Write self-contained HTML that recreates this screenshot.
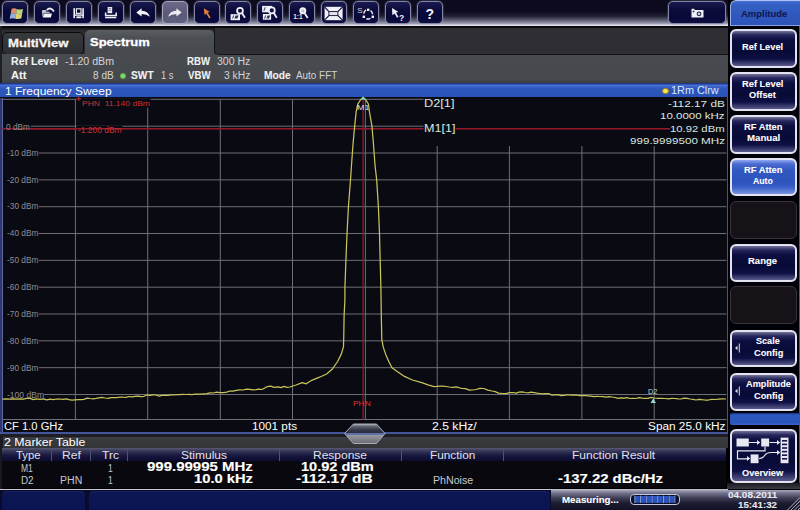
<!DOCTYPE html>
<html><head><meta charset="utf-8"><style>
*{margin:0;padding:0;box-sizing:border-box}
html,body{width:800px;height:510px;overflow:hidden;background:#000;font-family:"Liberation Sans",sans-serif}
.a{position:absolute}
.t{position:absolute;white-space:pre}
.tbb{position:absolute;top:0.8px;width:26px;height:23.6px;border-radius:5px;border:1.2px solid #8484a4;
 background:linear-gradient(#1a1a50 0,#0c0c3c 35%,#08083a 80%,#101040 100%);box-shadow:0 0 1.5px #9090b0;z-index:3}
.tbb svg{position:absolute;left:-1px;top:-1px}
.tbb.dis{background:linear-gradient(#6a6a88 0,#5a5a78 60%,#606080 100%);border-color:#a8a8c4}
.sk{position:absolute;left:729.5px;width:67px;border-radius:6px;border:2px solid #e2e2f0;
 background:linear-gradient(#74749a 0,#26265c 4px,#0c0e40 9px,#080a36 60%,#0e1044 80%,#5a5a8c 100%);z-index:10}
.sk.on{background:linear-gradient(#90a8f0 0,#4a6ad0 4px,#3058c0 10px,#2c54bc 65%,#3a60c8 80%,#7a94e0 100%)}
.sk.off{border:1.2px solid #36343a;background:#161218}
</style></head><body>
<!-- toolbar -->
<div class="a" style="left:0;top:0;width:728px;height:26px;background:linear-gradient(#0c0a1c 0,#0c0a1c 11px,#1e1e30 16px,#6a6a80 21px,#a8a8bc 24px,#e0e0ec 25px,#e0e0ec 25.5px,#101010 26px)"></div>
<div class="tbb" style="left:2.3px"><svg width="26" height="23" viewBox="0 0 26 23"><g transform="translate(8.2,7.2) scale(0.9)">
<path d="M1.6,0.6 Q4.5,-0.6 7.2,0.8 L6.6,6 Q3.6,5.2 0.6,6.2 Z" fill="#e06a40"/>
<path d="M7.2,0.8 Q10.5,2 14.2,0.8 L13.2,6.4 Q9.8,7.4 6.6,6 Z" fill="#a8c858"/>
<path d="M0.6,6.2 Q3.6,5.2 6.6,6 L5.8,11.6 Q2.8,10.6 -0.6,11.6 Z" fill="#7898d0"/>
<path d="M6.6,6 Q9.8,7.4 13.2,6.4 L12.4,11.2 Q9,12.6 5.8,11.6 Z" fill="#d0c848"/>
<path d="M1.6,0.6 Q4.5,-0.6 7.2,0.8 Q10.5,2 14.2,0.8 L12.4,11.2 Q9,12.6 5.8,11.6 Q2.8,10.6 -0.6,11.6 Z" fill="#ffffff" opacity="0.22"/>
</g></svg></div>
<div class="tbb" style="left:34.2px"><svg width="26" height="23" viewBox="0 0 26 23">
<rect x="8.1" y="9.2" width="4.2" height="1.6" fill="#f0f0f8"/>
<path d="M8.1,10.8 L15.3,10.8 L15.8,11.8 L9.6,11.8 L8.6,16.2 Z" fill="#e0e0ea"/>
<path d="M9.8,12.4 L18,12.4 L16.8,16.4 L8.8,16.4 Z" fill="#f4f4fa"/>
<path d="M12.8,8.9 Q16.8,5.6 19.9,10.4" stroke="#f0f0f8" stroke-width="1.9" fill="none"/>
</svg></div>
<div class="tbb" style="left:66.0px"><svg width="26" height="23" viewBox="0 0 26 23">
<rect x="7.4" y="7.2" width="1.6" height="10" fill="#f0f0f8"/>
<rect x="16.3" y="7.2" width="1.6" height="10" fill="#f0f0f8"/>
<rect x="10.4" y="7.8" width="4.6" height="4.6" fill="none" stroke="#e8e8f2" stroke-width="1.2"/>
<rect x="8.4" y="13.4" width="9" height="1.4" fill="#f0f0f8"/>
<rect x="10.4" y="15.4" width="5" height="1.8" fill="#f0f0f8"/>
</svg></div>
<div class="tbb" style="left:97.9px"><svg width="26" height="23" viewBox="0 0 26 23">
<rect x="9.6" y="6" width="4.6" height="6.2" fill="#e8e8f2"/>
<path d="M10.6,7.6 h2.6 M10.6,9.4 h2.6" stroke="#606080" stroke-width="0.7"/>
<path d="M7.6,11.4 v3.2 h10.6 v-3.2" fill="none" stroke="#f0f0f8" stroke-width="1.5"/>
<rect x="7.1" y="15.8" width="11.2" height="1.5" fill="#f0f0f8"/>
</svg></div>
<div class="tbb" style="left:129.8px"><svg width="26" height="23" viewBox="0 0 26 23">
<path d="M6.3,11.4 L11.6,7.3 L11.6,9.8 Q17.8,9.6 20,15.8 Q16.6,13.2 11.6,13.1 L11.6,15.5 Z" fill="#f0f0f8"/>
</svg></div>
<div class="tbb dis" style="left:161.7px"><svg width="26" height="23" viewBox="0 0 26 23">
<path d="M19.7,11.4 L14.4,7.3 L14.4,9.8 Q8.2,9.6 6,15.8 Q9.4,13.2 14.4,13.1 L14.4,15.5 Z" fill="#ececf4"/>
</svg></div>
<div class="tbb" style="left:193.5px"><svg width="26" height="23" viewBox="0 0 26 23">
<path d="M9.8,7.2 L15.8,10.9 L13.5,11.6 L16.6,16.6 L15.3,17.5 L12.2,12.5 L10.6,14.2 Z" fill="#e8803c"/>
</svg></div>
<div class="tbb" style="left:225.4px"><svg width="26" height="23" viewBox="0 0 26 23">
<rect x="5.6" y="13.2" width="9.4" height="6" fill="#f0f0f8"/>
<path d="M7,17.6 l1.2,-3 h1 l-1.2,3 Z M9.4,17.6 l1.2,-3 h3 l-1.2,3 Z" fill="#303058"/>
<circle cx="15" cy="9.8" r="2.9" fill="none" stroke="#f0f0f8" stroke-width="1.8"/>
<path d="M16.9,12.1 L20,16.8" stroke="#f0f0f8" stroke-width="1.8"/>
</svg></div>
<div class="tbb" style="left:257.3px"><svg width="26" height="23" viewBox="0 0 26 23">
<rect x="5.1" y="4.9" width="10" height="6.4" fill="#f0f0f8"/>
<path d="M6.4,9.8 l1.4,-3.6 h1 l-1.4,3.6 Z" fill="#303058"/>
<rect x="5.9" y="13" width="8.2" height="5.7" fill="#f0f0f8"/>
<path d="M7,17.4 l1.2,-3 h1 l-1.2,3 Z M9.4,17.4 l1.2,-3 h2.6 l-1.2,3 Z" fill="#303058"/>
<circle cx="14.8" cy="9.4" r="3" fill="#14144a" stroke="#f0f0f8" stroke-width="1.7"/>
<path d="M16.7,11.8 L19.8,16.9" stroke="#f0f0f8" stroke-width="1.8"/>
</svg></div>
<div class="tbb" style="left:289.1px"><svg width="26" height="23" viewBox="0 0 26 23">
<text x="4.2" y="18.4" font-family="Liberation Sans" font-weight="700" font-size="6.5" fill="#e8e8f0">1:1</text>
<circle cx="13.8" cy="9.8" r="3.5" fill="#f0f0f8"/>
<circle cx="13.8" cy="9.8" r="1.6" fill="#c0c0d0"/>
<path d="M15.8,12.5 L18.7,17" stroke="#f0f0f8" stroke-width="1.8"/>
</svg></div>
<div class="tbb" style="left:321.0px"><svg width="26" height="23" viewBox="0 0 26 23">
<rect x="3.6" y="5.8" width="18" height="13.4" fill="#f0f0f8"/>
<path d="M3.6,5.8 L7.9,10.6 M21.6,5.8 L16.9,10.6 M3.6,19.2 L7.9,14.6 M21.6,19.2 L16.9,14.6" stroke="#101030" stroke-width="1.1"/>
<rect x="7.9" y="10.6" width="9" height="4" fill="#e4e4ee" stroke="#101030" stroke-width="0.9"/>
</svg></div>
<div class="tbb" style="left:352.9px"><svg width="26" height="23" viewBox="0 0 26 23">
<text x="4.2" y="11.6" font-family="Liberation Sans" font-size="8" fill="#d8d8e8">S</text>
<g fill="#f0f0f8"><rect x="14" y="7.6" width="2.4" height="2.4"/><rect x="9.6" y="14.6" width="2.4" height="2.4"/><rect x="18.6" y="14.6" width="2.4" height="2.4"/></g>
<path d="M10.6,12.6 Q11.4,10 13,8.8 M17.6,9.4 Q19.4,11 19.6,13.2 M13.4,17.6 Q15.2,18.6 17.4,17.4" stroke="#f0f0f8" stroke-width="1.4" fill="none"/>
</svg></div>
<div class="tbb" style="left:384.7px"><svg width="26" height="23" viewBox="0 0 26 23">
<path d="M7,7 L13.5,11 L11,11.6 L13.5,16 L12,16.8 L9.6,12.4 L7.4,14.2 Z" fill="#f0f0f8"/>
<text x="14" y="20" font-family="Liberation Sans" font-weight="700" font-size="8.5" fill="#f0f0f8">?</text>
</svg></div>
<div class="tbb" style="left:416.6px"><svg width="26" height="23" viewBox="0 0 26 23">
<text x="8.5" y="17.5" font-family="Liberation Sans" font-weight="700" font-size="14" fill="#f4f4fa">?</text>
</svg></div>
<div class="tbb" style="left:667.5px;width:58px"><svg width="58" height="23" viewBox="0 0 58 23">
<rect x="23.5" y="9" width="12" height="7.5" fill="#f0f0f8"/><rect x="23.5" y="7.8" width="3" height="1.5" fill="#f0f0f8"/>
<circle cx="31" cy="12.8" r="2.4" fill="#202040"/><circle cx="31" cy="12.8" r="1.4" fill="#d0d0e0"/><circle cx="25.5" cy="10.5" r="1" fill="#404060"/>
</svg></div>
<!-- tab bar -->
<div class="a" style="left:0;top:26px;width:728px;height:28px;background:linear-gradient(#0a0a0a 0,#0a0a0a 1.5px,#222226 3px,#2f2e34 6px,#2f2e34 100%)"></div>
<div class="a" style="left:1.5px;top:32px;width:82px;height:22.5px;border-radius:5px;border:1px solid #0a0a0a;background:linear-gradient(#38393c,#2e2f32)"></div>
<div class="a" style="left:85px;top:30px;width:129px;height:26px;border-radius:5px 5px 0 0;background:linear-gradient(#5a5d62 0,#4c4f54 30%,#46494e 100%)"></div>
<!-- info panel -->
<div class="a" style="left:0;top:54px;width:728px;height:29px;background:linear-gradient(#484b50 0,#45484d 90%,#3a3c42 100%)"></div>
<div class="a" style="left:0;top:26px;width:1.5px;height:57px;background:#202024;z-index:1"></div>
<div class="a" style="left:214px;top:28px;width:514px;height:26.5px;border-radius:0 0 0 5px;background:#2f2e34;border-left:1px solid #141414;border-bottom:1.2px solid #141414"></div>
<div class="a" style="left:119.5px;top:73px;width:6px;height:6px;border-radius:50%;background:radial-gradient(#a0e890 0,#60c050 55%,#3a8030 100%)"></div>
<!-- diagram frame -->
<div class="a" style="left:0;top:84px;width:728px;height:350px;background:#5a6aa8"></div>
<div class="a" style="left:3px;top:97px;width:724px;height:335px;background:#0a0a12"></div>
<div class="a" style="left:0;top:97px;width:1.8px;height:335px;background:#34366a"></div>
<div class="a" style="left:0;top:82.5px;width:728px;height:14.5px;background:linear-gradient(#1a2e70 0,#2a4aa8 1.2px,#4a72d6 2.4px,#3a62c8 3.6px,#2c56bc 6px,#2852b4 100%)"></div>
<div class="a" style="left:0;top:96.5px;width:728px;height:1.5px;background:#0a0a18"></div>
<div class="a" style="left:662.3px;top:87.8px;width:6.4px;height:6.4px;border-radius:50%;background:#f4e850;border:0.8px solid #a08020"></div>
<svg class="a" style="left:0;top:0;z-index:2" width="800" height="510">
<g stroke="#6e6e76" stroke-width="1"><line x1="75.40" y1="99.3" x2="75.40" y2="419.5"/>
<line x1="147.70" y1="99.3" x2="147.70" y2="419.5"/>
<line x1="220.30" y1="99.3" x2="220.30" y2="419.5"/>
<line x1="292.50" y1="99.3" x2="292.50" y2="419.5"/>
<line x1="365.40" y1="99.3" x2="365.40" y2="419.5"/>
<line x1="437.20" y1="99.3" x2="437.20" y2="419.5"/>
<line x1="509.40" y1="99.3" x2="509.40" y2="419.5"/>
<line x1="581.90" y1="99.3" x2="581.90" y2="419.5"/>
<line x1="654.20" y1="99.3" x2="654.20" y2="419.5"/>
<line x1="2.5" y1="99.30" x2="726.5" y2="99.30"/>
<line x1="2.5" y1="126.20" x2="726.5" y2="126.20"/>
<line x1="2.5" y1="153.03" x2="726.5" y2="153.03"/>
<line x1="2.5" y1="179.86" x2="726.5" y2="179.86"/>
<line x1="2.5" y1="206.69" x2="726.5" y2="206.69"/>
<line x1="2.5" y1="233.52" x2="726.5" y2="233.52"/>
<line x1="2.5" y1="260.35" x2="726.5" y2="260.35"/>
<line x1="2.5" y1="287.18" x2="726.5" y2="287.18"/>
<line x1="2.5" y1="314.01" x2="726.5" y2="314.01"/>
<line x1="2.5" y1="340.84" x2="726.5" y2="340.84"/>
<line x1="2.5" y1="367.67" x2="726.5" y2="367.67"/>
<line x1="2.5" y1="394.50" x2="726.5" y2="394.50"/>
<line x1="2.5" y1="419.50" x2="726.5" y2="419.50"/></g>
<line x1="2.5" y1="128.8" x2="726" y2="128.8" stroke="#98182c" stroke-width="1.4"/>
<line x1="363.1" y1="99.3" x2="363.1" y2="419.5" stroke="#90182c" stroke-width="1.3"/>
<!-- label backgrounds -->
<g fill="#0a0a12">
<rect x="3" y="122" width="28" height="9"/>
<rect x="3" y="148.7" width="35.8" height="9"/><rect x="3" y="175.5" width="35.8" height="9"/><rect x="3" y="202.4" width="35.8" height="9"/><rect x="3" y="229.2" width="35.8" height="9"/><rect x="3" y="256.0" width="35.8" height="9"/><rect x="3" y="282.8" width="35.8" height="9"/><rect x="3" y="309.7" width="35.8" height="9"/><rect x="3" y="336.5" width="35.8" height="9"/><rect x="3" y="363.3" width="35.8" height="9"/><rect x="3" y="390.2" width="41" height="9"/>
<rect x="76.6" y="98.6" width="74" height="9"/>
<rect x="76.5" y="125.5" width="46" height="9"/>
<rect x="423.5" y="98" width="303" height="48"/>
</g>
<line x1="2.5" y1="128.8" x2="76" y2="128.8" stroke="#98182c" stroke-width="1.4"/>
<line x1="76" y1="128.8" x2="124" y2="128.8" stroke="#98182c" stroke-width="1.4"/>
<line x1="456" y1="128.8" x2="670" y2="128.8" stroke="#98182c" stroke-width="1.4"/>
<path d="M76.5,98.8 h4.5 M78.75,96.5 v4.5" stroke="#c83232" stroke-width="1"/>
<path d="M2.5,399.2 L6.0,398.8 L9.5,399.1 L13.0,398.8 L16.5,399.1 L20.0,398.9 L23.3,399.1 L26.7,398.4 L30.0,398.4 L33.3,399.6 L36.7,398.9 L40.0,399.3 L43.3,398.9 L46.7,399.9 L50.0,399.1 L53.3,399.6 L56.7,399.0 L60.0,399.0 L63.0,399.4 L66.0,398.8 L69.0,399.7 L72.0,400.2 L75.0,399.8 L78.0,399.6 L81.0,399.6 L84.0,399.3 L87.0,398.1 L90.0,398.5 L93.0,398.8 L96.0,398.4 L99.0,397.9 L102.0,397.4 L105.0,398.0 L108.0,398.3 L111.0,397.6 L114.0,397.7 L117.0,397.7 L120.0,397.0 L123.0,397.2 L126.0,397.3 L129.0,396.5 L132.0,396.9 L135.0,396.4 L138.0,396.1 L141.0,396.6 L144.0,396.3 L147.0,395.0 L150.0,395.4 L153.0,394.9 L156.0,395.0 L159.0,396.1 L162.0,395.3 L165.0,395.4 L168.0,395.4 L171.0,394.8 L174.0,395.0 L177.0,394.7 L180.0,394.7 L183.0,394.4 L186.0,394.5 L189.0,394.4 L192.0,394.7 L195.0,394.0 L198.0,394.0 L201.0,394.1 L204.0,393.8 L207.0,393.7 L210.0,392.8 L213.3,393.0 L216.7,392.2 L220.0,392.6 L223.3,392.6 L226.7,392.2 L230.0,391.0 L233.2,391.2 L236.3,390.3 L239.5,389.8 L243.0,390.0 L246.5,389.1 L250.0,389.4 L253.0,389.9 L256.0,389.6 L259.0,389.2 L262.0,389.5 L267.0,386.7 L270.7,386.2 L274.3,387.3 L278.0,386.9 L281.0,387.6 L284.0,386.4 L287.0,387.4 L290.0,387.0 L296.0,385.0 L302.3,382.7 L306.2,383.8 L311.7,380.3 L319.5,377.2 L326.6,374.0 L332.1,369.3 L337.6,361.5 L341.5,353.6 L343.5,346.6 L343.8,335.0 L344.1,316.0 L344.9,300.0 L344.9,288.0 L345.9,261.0 L347.0,234.0 L348.4,207.0 L350.5,180.0 L351.5,165.0 L353.2,142.0 L354.7,125.8 L356.2,111.6 L357.8,104.0 L360.6,99.8 L363.2,97.3 L365.8,99.8 L368.4,104.0 L369.4,111.6 L371.9,125.8 L373.3,142.0 L375.0,165.0 L376.7,180.0 L378.4,207.0 L379.5,234.0 L380.2,261.0 L380.9,288.0 L381.1,300.0 L381.3,316.0 L381.8,339.5 L383.3,347.4 L385.7,354.4 L388.8,361.5 L392.0,367.8 L397.5,371.7 L404.5,376.4 L412.4,380.0 L421.8,382.7 L428.0,384.8 L434.0,386.6 L437.0,386.4 L440.0,386.1 L443.0,386.2 L446.0,386.5 L449.4,387.0 L452.8,387.3 L456.2,386.9 L462.0,388.5 L465.6,388.7 L469.2,390.1 L472.6,390.0 L476.0,389.5 L479.9,388.4 L483.9,388.5 L487.9,390.1 L492.0,391.0 L495.2,391.6 L498.5,393.1 L501.7,393.4 L505.9,393.6 L510.0,392.5 L513.0,392.5 L516.0,393.2 L519.0,392.2 L522.0,391.9 L525.0,392.5 L528.0,392.8 L531.0,392.2 L534.0,392.7 L537.0,393.2 L540.0,393.5 L543.0,393.9 L546.0,393.6 L549.0,393.7 L552.0,395.1 L555.0,394.9 L558.0,394.7 L561.0,395.6 L564.0,395.5 L567.0,394.8 L570.0,395.0 L573.0,395.0 L576.0,395.2 L579.0,395.5 L582.0,395.5 L585.0,395.5 L588.0,395.8 L591.0,396.1 L594.0,396.7 L597.0,396.3 L600.0,396.5 L603.0,396.6 L606.0,397.2 L609.0,396.7 L612.0,397.0 L615.0,397.5 L618.0,398.4 L621.0,397.9 L624.0,398.2 L627.0,397.6 L630.0,398.5 L633.0,398.3 L636.0,398.5 L639.0,397.6 L642.0,398.2 L645.0,398.3 L648.0,398.3 L651.0,397.4 L654.0,398.0 L657.7,398.3 L661.3,398.3 L665.0,398.5 L668.3,398.8 L671.7,398.3 L675.0,398.5 L678.0,398.9 L681.0,399.0 L684.0,398.1 L687.0,398.3 L690.0,399.0 L693.0,399.4 L696.0,400.0 L699.0,399.3 L702.0,399.7 L705.0,400.0 L708.3,400.0 L711.7,399.4 L715.0,399.5 L718.7,399.1 L722.3,398.9 L726.0,399.0" fill="none" stroke="#c8c45a" stroke-width="1.25" stroke-linejoin="round"/>
<path d="M361.2,99.8 L363.2,96.6 L365.2,99.8 Z" fill="#60d8e8"/>
<path d="M650.6,403 L653.2,398.2 L655.9,403 Z" fill="#98d4d4"/>
</svg>
<!-- footer -->
<div class="a" style="left:3px;top:420.2px;width:724px;height:11px;background:#0a0a12;z-index:3"></div>
<div class="a" style="left:0;top:432px;width:728px;height:1.8px;background:#44549a;z-index:3"></div>
<div class="a" style="left:0;top:433.8px;width:728px;height:3px;background:#1e1e22;z-index:3"></div>
<svg class="a" style="left:343px;top:423px;z-index:4" width="43" height="22"><defs><linearGradient id="hg" x1="0" y1="0" x2="0" y2="1"><stop offset="0" stop-color="#b0b0b8"/><stop offset="0.12" stop-color="#60646e"/><stop offset="0.3" stop-color="#34384a"/><stop offset="0.44" stop-color="#2a2e40"/><stop offset="0.46" stop-color="#6070a8"/><stop offset="0.54" stop-color="#6070a8"/><stop offset="0.56" stop-color="#9a9aa2"/><stop offset="1" stop-color="#6a6a72"/></linearGradient></defs>
<path d="M1.5,10.5 L10.5,1 L33.5,1 L42,10.5 L33.5,20.5 L10.5,20.5 Z" fill="url(#hg)" stroke="#a8acb8" stroke-width="1"/></svg>
<!-- marker table -->
<div class="a" style="left:0;top:436.6px;width:728px;height:11.6px;background:linear-gradient(#3a3c40,#333539);z-index:3"></div><div class="a" style="left:0;top:436px;width:2.5px;height:54px;background:#1a1a1e;z-index:3"></div>
<div class="a" style="left:2px;top:448px;width:724px;height:40px;background:#08080e;z-index:3"></div>
<div class="a" style="left:2px;top:448px;width:724px;height:12.5px;background:linear-gradient(#5a5a74 0,#3a3a5c 20%,#16163e 60%,#0c0c30 100%);z-index:3"></div>
<div class="a" style="left:0;top:488.5px;width:728px;height:1.5px;background:#c8c8d8;z-index:3"></div>
<div class="a" style="left:51px;top:448px;width:1px;height:12.5px;background:#505070;z-index:4"></div><div class="a" style="left:90px;top:448px;width:1px;height:12.5px;background:#505070;z-index:4"></div><div class="a" style="left:126.6px;top:448px;width:1px;height:12.5px;background:#505070;z-index:4"></div><div class="a" style="left:279.4px;top:448px;width:1px;height:12.5px;background:#505070;z-index:4"></div><div class="a" style="left:400.5px;top:448px;width:1px;height:12.5px;background:#505070;z-index:4"></div><div class="a" style="left:502.6px;top:448px;width:1px;height:12.5px;background:#505070;z-index:4"></div>
<!-- status bar -->
<div class="a" style="left:0;top:490px;width:800px;height:20px;background:linear-gradient(#0a0a2a,#0a0a30);z-index:3"></div>
<div class="a" style="left:2px;top:491px;width:83px;height:19px;border-radius:4px 4px 0 0;background:linear-gradient(#1a2260 0,#0c1652 2px,#0a1450 100%);z-index:4"></div>
<div class="a" style="left:89px;top:491px;width:461px;height:19px;border-radius:4px 4px 0 0;background:linear-gradient(#1a2260 0,#0c1652 2px,#0a1450 100%);z-index:4"></div>
<div class="a" style="left:551px;top:489px;width:249px;height:21px;background:linear-gradient(#d0d0dc 0,#a8a8bc 1px,#74748e 4px,#3e3e56 9px,#1c1c32 14px,#121226 100%);z-index:4"></div>
<div class="a" style="left:629.5px;top:494px;width:50px;height:10.5px;border-radius:4px;border:1.2px solid #c4c4dc;background:#08102c;z-index:5"></div>
<svg class="a" style="left:629.5px;top:494px;z-index:6" width="50" height="11"><g fill="#2a54c0"><rect x="5.00" y="2" width="4.9" height="6.8"/><rect x="10.72" y="2" width="4.9" height="6.8"/><rect x="16.44" y="2" width="4.9" height="6.8"/><rect x="22.16" y="2" width="4.9" height="6.8"/><rect x="27.88" y="2" width="4.9" height="6.8"/><rect x="33.60" y="2" width="4.9" height="6.8"/><rect x="39.32" y="2" width="4.9" height="6.8"/></g><g fill="#98a4dc"><rect x="4.40" y="1.6" width="0.9" height="7.4"/><rect x="10.12" y="1.6" width="0.9" height="7.4"/><rect x="15.84" y="1.6" width="0.9" height="7.4"/><rect x="21.56" y="1.6" width="0.9" height="7.4"/><rect x="27.28" y="1.6" width="0.9" height="7.4"/><rect x="33.00" y="1.6" width="0.9" height="7.4"/><rect x="38.72" y="1.6" width="0.9" height="7.4"/><rect x="44.44" y="1.6" width="0.9" height="7.4"/></g></svg>
<svg class="a" style="left:786px;top:496px;z-index:6" width="14" height="14"><g stroke="#b0b0c0" stroke-width="1"><path d="M14,1.5 L1.5,14 M14,5 L5,14 M14,8.5 L8.5,14 M14,12 L12,14"/></g></svg>
<!-- softkeys -->
<div class="a" style="left:728px;top:0;width:72px;height:490px;background:#000008;z-index:9"></div>
<div class="a" style="left:798.5px;top:26px;width:1.5px;height:457px;background:#3a5ab8;z-index:9"></div>
<div class="a" style="left:726.5px;top:483px;width:73.5px;height:6px;background:linear-gradient(#1a1a22,#3a3a42);z-index:9"></div>
<div class="a" style="left:726.6px;top:84px;width:1.8px;height:350px;background:#3454b0;z-index:9"></div>
<div class="a" style="left:729.5px;top:0;width:70.5px;height:25.5px;border-radius:6px 0 0 0;border-top:1px solid #b0c4f4;border-left:1.5px solid #9ab0e8;border-bottom:1px solid #8aa0e0;background:linear-gradient(#4a70d4 0,#3560c4 3px,#3058bc 60%,#2c54b8 100%);z-index:10"></div>
<div class="sk" style="top:28.8px;height:39.4px"></div>
<div class="sk" style="top:72.3px;height:38.5px"></div>
<div class="sk" style="top:115px;height:38.5px"></div>
<div class="sk on" style="top:158px;height:38px"></div>
<div class="sk off" style="top:200.6px;height:38.8px"></div>
<div class="sk" style="top:243.6px;height:38.2px"></div>
<div class="sk off" style="top:285.5px;height:38.8px"></div>
<div class="sk" style="top:329.7px;height:37.8px"></div>
<div class="sk" style="top:372.8px;height:37.8px"></div>
<div class="a" style="left:729.5px;top:413px;width:70.5px;height:12px;border-radius:2px 0 0 2px;background:linear-gradient(#18307a 0,#2c58c0 2px,#2a54b8 80%,#3a64c8 100%);z-index:10"></div>
<div class="sk" style="top:428.8px;height:53.8px"></div>
<svg class="a" style="left:729px;top:428px;z-index:12" width="70" height="40">
<g fill="#e8e8f0"><rect x="7.5" y="10.5" width="12.3" height="8"/><rect x="32.2" y="10.5" width="7.9" height="8"/><rect x="21.6" y="26.4" width="7.9" height="8.8"/>
<rect x="51.6" y="9.6" width="7.9" height="25.6"/></g>
<g fill="#14144a"><rect x="53" y="12" width="5.1" height="1.6"/><rect x="53" y="15.6" width="5.1" height="1.6"/><rect x="53" y="19.2" width="5.1" height="1.6"/><rect x="53" y="22.8" width="5.1" height="1.6"/><rect x="53" y="26.4" width="5.1" height="1.6"/><rect x="53" y="30" width="5.1" height="1.6"/></g>
<g stroke="#e8e8f0" stroke-width="1.2" fill="none"><path d="M20,14.5 h9 M40.5,14.5 h8.5 M36,18.8 v4 h-27.5 v8 h10 M30,30.5 q4,0 6,-3.5 q2,-2.5 6,-2.5 h6"/></g>
<g fill="#e8e8f0"><path d="M28,12 l3.2,2.5 -3.2,2.5 Z M48,12 l3.2,2.5 -3.2,2.5 Z M18,28 l3.2,2.5 -3.2,2.5 Z M48,22 l3.2,2.5 -3.2,2.5 Z"/></g>
</svg>
<svg class="a" style="left:733px;top:340px;z-index:12" width="10" height="60"><g fill="#e0e0e8"><path d="M2,8 l2.5,-2.2 v4.4 Z M2,51 l2.5,-2.2 v4.4 Z"/><rect x="5.8" y="3.5" width="1" height="9"/><rect x="5.8" y="46.5" width="1" height="9"/></g></svg>
<div class="t" style="left:8.00px;top:38.29px;font-size:11px;line-height:11px;font-weight:700;color:#f4f4f4;transform:scaleX(1.197);transform-origin:0 0;-webkit-text-stroke:0.3px #f4f4f4;z-index:5">MultiView</div>
<div class="t" style="left:90.00px;top:36.89px;font-size:11px;line-height:11px;font-weight:700;color:#ffffff;transform:scaleX(1.178);transform-origin:0 0;-webkit-text-stroke:0.3px #ffffff;z-index:5">Spectrum</div>
<div class="t" style="left:10.50px;top:57.33px;font-size:10px;line-height:10px;font-weight:700;color:#f2f2f2;transform:scaleX(1.056);transform-origin:0 0;-webkit-text-stroke:0.08px #f2f2f2;z-index:5">Ref Level</div>
<div class="t" style="left:64.50px;top:57.33px;font-size:10px;line-height:10px;font-weight:400;color:#d4d4d4;transform:scaleX(1.063);transform-origin:0 0;z-index:5">-1.20 dBm</div>
<div class="t" style="left:10.80px;top:70.83px;font-size:10px;line-height:10px;font-weight:700;color:#f2f2f2;transform:scaleX(1.113);transform-origin:0 0;-webkit-text-stroke:0.08px #f2f2f2;z-index:5">Att</div>
<div class="t" style="left:93.00px;top:70.83px;font-size:10px;line-height:10px;font-weight:400;color:#d4d4d4;transform:scaleX(1.005);transform-origin:0 0;z-index:5">8 dB</div>
<div class="t" style="left:131.25px;top:71.13px;font-size:10px;line-height:10px;font-weight:700;color:#f2f2f2;transform:scaleX(1.018);transform-origin:0 0;-webkit-text-stroke:0.08px #f2f2f2;z-index:5">SWT</div>
<div class="t" style="left:161.25px;top:71.13px;font-size:10px;line-height:10px;font-weight:400;color:#d4d4d4;transform:scaleX(0.937);transform-origin:0 0;z-index:5">1 s</div>
<div class="t" style="left:187.00px;top:56.73px;font-size:10px;line-height:10px;font-weight:700;color:#f2f2f2;transform:scaleX(0.961);transform-origin:0 0;-webkit-text-stroke:0.08px #f2f2f2;z-index:5">RBW</div>
<div class="t" style="left:216.60px;top:56.73px;font-size:10px;line-height:10px;font-weight:400;color:#d4d4d4;transform:scaleX(1.051);transform-origin:0 0;z-index:5">300 Hz</div>
<div class="t" style="left:187.50px;top:70.83px;font-size:10px;line-height:10px;font-weight:700;color:#f2f2f2;transform:scaleX(0.963);transform-origin:0 0;-webkit-text-stroke:0.08px #f2f2f2;z-index:5">VBW</div>
<div class="t" style="left:223.60px;top:70.83px;font-size:10px;line-height:10px;font-weight:400;color:#d4d4d4;transform:scaleX(1.029);transform-origin:0 0;z-index:5">3 kHz</div>
<div class="t" style="left:263.90px;top:70.83px;font-size:10px;line-height:10px;font-weight:700;color:#f2f2f2;transform:scaleX(1.021);transform-origin:0 0;-webkit-text-stroke:0.08px #f2f2f2;z-index:5">Mode</div>
<div class="t" style="left:296.25px;top:70.83px;font-size:10px;line-height:10px;font-weight:400;color:#d4d4d4;transform:scaleX(0.990);transform-origin:0 0;z-index:5">Auto FFT</div>
<div class="t" style="left:4.70px;top:85.51px;font-size:10.5px;line-height:10.5px;font-weight:400;color:#ffffff;transform:scaleX(1.141);transform-origin:0 0;z-index:5">1 Frequency Sweep</div>
<div class="t" style="left:670.90px;top:85.01px;font-size:10.5px;line-height:10.5px;font-weight:400;color:#d8e8ff;transform:scaleX(1.034);transform-origin:0 0;z-index:5">1Rm Clrw</div>
<div class="t" style="left:6.20px;top:122.50px;font-size:8.5px;line-height:8.5px;font-weight:400;color:#8e8e94;transform:scaleX(0.972);transform-origin:0 0;z-index:3">0 dBm</div>
<div class="t" style="left:6.60px;top:148.67px;font-size:8.5px;line-height:8.5px;font-weight:400;color:#8e8e94;transform:scaleX(0.980);transform-origin:0 0;z-index:3">-10 dBm</div>
<div class="t" style="left:6.60px;top:175.54px;font-size:8.5px;line-height:8.5px;font-weight:400;color:#8e8e94;transform:scaleX(0.980);transform-origin:0 0;z-index:3">-20 dBm</div>
<div class="t" style="left:6.60px;top:202.41px;font-size:8.5px;line-height:8.5px;font-weight:400;color:#8e8e94;transform:scaleX(0.980);transform-origin:0 0;z-index:3">-30 dBm</div>
<div class="t" style="left:6.60px;top:229.28px;font-size:8.5px;line-height:8.5px;font-weight:400;color:#8e8e94;transform:scaleX(0.980);transform-origin:0 0;z-index:3">-40 dBm</div>
<div class="t" style="left:6.60px;top:256.15px;font-size:8.5px;line-height:8.5px;font-weight:400;color:#8e8e94;transform:scaleX(0.980);transform-origin:0 0;z-index:3">-50 dBm</div>
<div class="t" style="left:6.60px;top:283.02px;font-size:8.5px;line-height:8.5px;font-weight:400;color:#8e8e94;transform:scaleX(0.980);transform-origin:0 0;z-index:3">-60 dBm</div>
<div class="t" style="left:6.60px;top:309.89px;font-size:8.5px;line-height:8.5px;font-weight:400;color:#8e8e94;transform:scaleX(0.980);transform-origin:0 0;z-index:3">-70 dBm</div>
<div class="t" style="left:6.60px;top:336.76px;font-size:8.5px;line-height:8.5px;font-weight:400;color:#8e8e94;transform:scaleX(0.980);transform-origin:0 0;z-index:3">-80 dBm</div>
<div class="t" style="left:6.60px;top:363.63px;font-size:8.5px;line-height:8.5px;font-weight:400;color:#8e8e94;transform:scaleX(0.980);transform-origin:0 0;z-index:3">-90 dBm</div>
<div class="t" style="left:6.60px;top:390.50px;font-size:8.5px;line-height:8.5px;font-weight:400;color:#8e8e94;transform:scaleX(1.004);transform-origin:0 0;z-index:3">-100 dBm</div>
<div class="t" style="left:81.75px;top:99.63px;font-size:8px;line-height:8px;font-weight:400;color:#c83232;transform:scaleX(1.063);transform-origin:0 0;z-index:3">PHN&nbsp;&nbsp;11.140&nbsp;dBm</div>
<div class="t" style="left:78.00px;top:125.90px;font-size:8.5px;line-height:8.5px;font-weight:400;color:#c83232;transform:scaleX(0.992);transform-origin:0 0;z-index:3">-1.200 dBm</div>
<div class="t" style="left:424.25px;top:99.03px;font-size:10px;line-height:10px;font-weight:400;color:#d8e8e0;transform:scaleX(1.275);transform-origin:0 0;z-index:4">D2[1]</div>
<div class="t" style="left:424.00px;top:124.23px;font-size:10px;line-height:10px;font-weight:400;color:#d8e8e0;transform:scaleX(1.258);transform-origin:0 0;z-index:4">M1[1]</div>
<div class="t" style="left:668.30px;top:100.01px;font-size:9.2px;line-height:9.2px;font-weight:400;color:#d8e8e0;transform:scaleX(1.285);transform-origin:0 0;z-index:4">-112.17 dB</div>
<div class="t" style="left:659.90px;top:112.11px;font-size:9.2px;line-height:9.2px;font-weight:400;color:#d8e8e0;transform:scaleX(1.252);transform-origin:0 0;z-index:4">10.0000 kHz</div>
<div class="t" style="left:670.00px;top:124.81px;font-size:9.2px;line-height:9.2px;font-weight:400;color:#d8e8e0;transform:scaleX(1.228);transform-origin:0 0;z-index:4">10.92 dBm</div>
<div class="t" style="left:629.50px;top:137.21px;font-size:9.2px;line-height:9.2px;font-weight:400;color:#d8e8e0;transform:scaleX(1.265);transform-origin:0 0;z-index:4">999.9999500 MHz</div>
<div class="t" style="left:357.00px;top:103.83px;font-size:8px;line-height:8px;font-weight:400;color:#d8e8e0;transform:scaleX(1.115);transform-origin:0 0;z-index:4">M1</div>
<div class="t" style="left:648.00px;top:387.85px;font-size:7.5px;line-height:7.5px;font-weight:400;color:#c0dcd8;transform:scaleX(0.977);transform-origin:0 0;z-index:4">D2</div>
<div class="t" style="left:353.00px;top:399.83px;font-size:8px;line-height:8px;font-weight:400;color:#d83838;transform:scaleX(1.052);transform-origin:0 0;z-index:4">PHN</div>
<div class="t" style="left:4.00px;top:422.14px;font-size:10px;line-height:10px;font-weight:400;color:#ffffff;transform:scaleX(1.118);transform-origin:0 0;z-index:5">CF 1.0 GHz</div>
<div class="t" style="left:252.00px;top:421.74px;font-size:10px;line-height:10px;font-weight:400;color:#ffffff;transform:scaleX(1.173);transform-origin:0 0;z-index:5">1001 pts</div>
<div class="t" style="left:432.00px;top:421.74px;font-size:10px;line-height:10px;font-weight:400;color:#ffffff;transform:scaleX(1.219);transform-origin:0 0;z-index:5">2.5 kHz/</div>
<div class="t" style="left:647.50px;top:421.74px;font-size:10px;line-height:10px;font-weight:400;color:#ffffff;transform:scaleX(1.181);transform-origin:0 0;z-index:5">Span 25.0 kHz</div>
<div class="t" style="left:4.00px;top:437.54px;font-size:10px;line-height:10px;font-weight:400;color:#ffffff;transform:scaleX(1.232);transform-origin:0 0;z-index:5">2 Marker Table</div>
<div class="t" style="left:16.00px;top:450.74px;font-size:10px;line-height:10px;font-weight:400;color:#e0e0e8;transform:scaleX(1.130);transform-origin:0 0;z-index:5">Type</div>
<div class="t" style="left:62.00px;top:450.74px;font-size:10px;line-height:10px;font-weight:400;color:#e0e0e8;transform:scaleX(1.204);transform-origin:0 0;z-index:5">Ref</div>
<div class="t" style="left:102.00px;top:450.74px;font-size:10px;line-height:10px;font-weight:400;color:#e0e0e8;transform:scaleX(1.208);transform-origin:0 0;z-index:5">Trc</div>
<div class="t" style="left:181.00px;top:450.74px;font-size:10px;line-height:10px;font-weight:400;color:#e0e0e8;transform:scaleX(1.200);transform-origin:0 0;z-index:5">Stimulus</div>
<div class="t" style="left:313.00px;top:450.74px;font-size:10px;line-height:10px;font-weight:400;color:#e0e0e8;transform:scaleX(1.199);transform-origin:0 0;z-index:5">Response</div>
<div class="t" style="left:429.70px;top:450.74px;font-size:10px;line-height:10px;font-weight:400;color:#e0e0e8;transform:scaleX(1.180);transform-origin:0 0;z-index:5">Function</div>
<div class="t" style="left:572.30px;top:450.74px;font-size:10px;line-height:10px;font-weight:400;color:#e0e0e8;transform:scaleX(1.197);transform-origin:0 0;z-index:5">Function Result</div>
<div class="t" style="left:21.00px;top:463.94px;font-size:10px;line-height:10px;font-weight:400;color:#c8c8d0;transform:scaleX(0.850);transform-origin:0 0;z-index:5">M1</div>
<div class="t" style="left:107.50px;top:463.94px;font-size:10px;line-height:10px;font-weight:400;color:#c8c8d0;transform:scaleX(0.850);transform-origin:0 0;z-index:5">1</div>
<div class="t" style="left:21.00px;top:475.54px;font-size:10px;line-height:10px;font-weight:400;color:#c8c8d0;transform:scaleX(0.983);transform-origin:0 0;z-index:5">D2</div>
<div class="t" style="left:60.00px;top:475.54px;font-size:10px;line-height:10px;font-weight:400;color:#c8c8d0;transform:scaleX(1.053);transform-origin:0 0;z-index:5">PHN</div>
<div class="t" style="left:107.50px;top:475.54px;font-size:10px;line-height:10px;font-weight:400;color:#c8c8d0;transform:scaleX(0.850);transform-origin:0 0;z-index:5">1</div>
<div class="t" style="left:432.80px;top:475.54px;font-size:10px;line-height:10px;font-weight:400;color:#c8c8d0;transform:scaleX(1.064);transform-origin:0 0;z-index:5">PhNoise</div>
<div class="t" style="left:147.20px;top:461.14px;font-size:12px;line-height:12px;font-weight:700;color:#ffffff;transform:scaleX(1.249);transform-origin:0 0;-webkit-text-stroke:0.12px #ffffff;z-index:5">999.99995 MHz</div>
<div class="t" style="left:194.00px;top:473.04px;font-size:12px;line-height:12px;font-weight:700;color:#ffffff;transform:scaleX(1.228);transform-origin:0 0;-webkit-text-stroke:0.12px #ffffff;z-index:5">10.0 kHz</div>
<div class="t" style="left:301.00px;top:461.14px;font-size:12px;line-height:12px;font-weight:700;color:#ffffff;transform:scaleX(1.213);transform-origin:0 0;-webkit-text-stroke:0.12px #ffffff;z-index:5">10.92 dBm</div>
<div class="t" style="left:296.00px;top:473.04px;font-size:12px;line-height:12px;font-weight:700;color:#ffffff;transform:scaleX(1.290);transform-origin:0 0;-webkit-text-stroke:0.12px #ffffff;z-index:5">-112.17 dB</div>
<div class="t" style="left:558.40px;top:473.04px;font-size:12px;line-height:12px;font-weight:700;color:#ffffff;transform:scaleX(1.240);transform-origin:0 0;-webkit-text-stroke:0.12px #ffffff;z-index:5">-137.22 dBc/Hz</div>
<div class="t" style="left:561.90px;top:495.16px;font-size:9.5px;line-height:9.5px;font-weight:700;color:#ffffff;transform:scaleX(1.022);transform-origin:0 0;-webkit-text-stroke:0.08px #ffffff;z-index:5">Measuring...</div>
<div class="t" style="left:727.60px;top:491.48px;font-size:9px;line-height:9px;font-weight:700;color:#e8e8f0;transform:scaleX(1.109);transform-origin:0 0;-webkit-text-stroke:0.08px #e8e8f0;z-index:5">04.08.2011</div>
<div class="t" style="left:738.00px;top:501.18px;font-size:9px;line-height:9px;font-weight:700;color:#e8e8f0;transform:scaleX(1.083);transform-origin:0 0;-webkit-text-stroke:0.08px #e8e8f0;z-index:5">15:41:32</div>
<div class="t" style="left:741.00px;top:9.36px;font-size:9.5px;line-height:9.5px;font-weight:700;color:#101850;transform:scaleX(0.997);transform-origin:0 0;-webkit-text-stroke:0.08px #101850;z-index:12">Amplitude</div>
<div class="t" style="left:742.40px;top:42.98px;font-size:9px;line-height:9px;font-weight:700;color:#ffffff;transform:scaleX(1.027);transform-origin:0 0;-webkit-text-stroke:0.08px #ffffff;z-index:12">Ref Level</div>
<div class="t" style="left:742.10px;top:79.98px;font-size:9px;line-height:9px;font-weight:700;color:#ffffff;transform:scaleX(1.035);transform-origin:0 0;-webkit-text-stroke:0.08px #ffffff;z-index:12">Ref Level</div>
<div class="t" style="left:749.20px;top:90.98px;font-size:9px;line-height:9px;font-weight:700;color:#ffffff;transform:scaleX(1.031);transform-origin:0 0;-webkit-text-stroke:0.08px #ffffff;z-index:12">Offset</div>
<div class="t" style="left:743.50px;top:122.78px;font-size:9px;line-height:9px;font-weight:700;color:#ffffff;transform:scaleX(1.035);transform-origin:0 0;-webkit-text-stroke:0.08px #ffffff;z-index:12">RF Atten</div>
<div class="t" style="left:746.50px;top:133.68px;font-size:9px;line-height:9px;font-weight:700;color:#ffffff;transform:scaleX(1.072);transform-origin:0 0;-webkit-text-stroke:0.08px #ffffff;z-index:12">Manual</div>
<div class="t" style="left:743.50px;top:165.78px;font-size:9px;line-height:9px;font-weight:700;color:#ffffff;transform:scaleX(1.035);transform-origin:0 0;-webkit-text-stroke:0.08px #ffffff;z-index:12">RF Atten</div>
<div class="t" style="left:752.75px;top:176.78px;font-size:9px;line-height:9px;font-weight:700;color:#ffffff;transform:scaleX(0.965);transform-origin:0 0;-webkit-text-stroke:0.08px #ffffff;z-index:12">Auto</div>
<div class="t" style="left:748.00px;top:257.08px;font-size:9px;line-height:9px;font-weight:700;color:#ffffff;transform:scaleX(1.055);transform-origin:0 0;-webkit-text-stroke:0.08px #ffffff;z-index:12">Range</div>
<div class="t" style="left:756.30px;top:336.68px;font-size:9px;line-height:9px;font-weight:700;color:#ffffff;transform:scaleX(1.008);transform-origin:0 0;-webkit-text-stroke:0.08px #ffffff;z-index:12">Scale</div>
<div class="t" style="left:754.00px;top:348.58px;font-size:9px;line-height:9px;font-weight:700;color:#ffffff;transform:scaleX(1.029);transform-origin:0 0;-webkit-text-stroke:0.08px #ffffff;z-index:12">Config</div>
<div class="t" style="left:745.90px;top:379.88px;font-size:9px;line-height:9px;font-weight:700;color:#ffffff;transform:scaleX(1.021);transform-origin:0 0;-webkit-text-stroke:0.08px #ffffff;z-index:12">Amplitude</div>
<div class="t" style="left:754.00px;top:391.58px;font-size:9px;line-height:9px;font-weight:700;color:#ffffff;transform:scaleX(1.029);transform-origin:0 0;-webkit-text-stroke:0.08px #ffffff;z-index:12">Config</div>
<div class="t" style="left:741.80px;top:469.48px;font-size:9px;line-height:9px;font-weight:700;color:#ffffff;transform:scaleX(1.029);transform-origin:0 0;-webkit-text-stroke:0.08px #ffffff;z-index:12">Overview</div>
</body></html>
